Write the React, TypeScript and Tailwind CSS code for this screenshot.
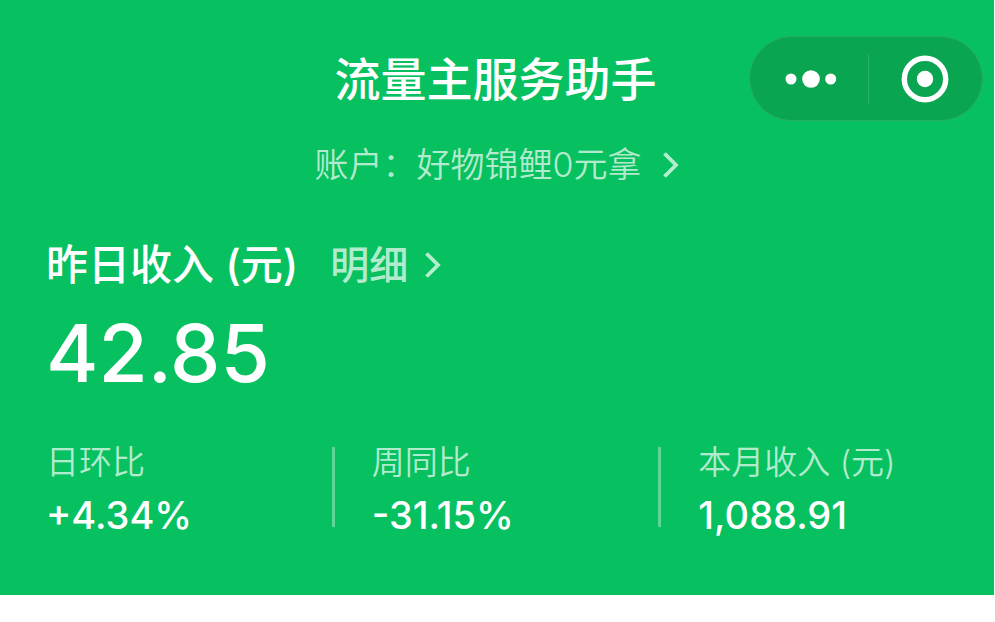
const stats = [
  { label: '日环比', value: '+4.34%' },
  { label: '周同比', value: '-31.15%' },
  { label: '本月收入 (元)', value: '1,088.91' },
];

function Chevron() {
  return (
    <svg className="h-7 w-[18px]" viewBox="0 0 18 28" fill="none" stroke="currentColor" strokeWidth="3.8">
      <path d="M2.5 2.5 14 14 2.5 25.5" />
    </svg>
  );
}

function Capsule() {
  return (
    <div className="flex h-[85px] w-[234px] items-center justify-self-end rounded-full border border-[#27ae60] bg-[#09a551]">
      <button type="button" aria-label="更多" className="flex h-full flex-1 items-center justify-center pl-1">
        <svg className="h-5 w-[52px]" viewBox="0 0 52 20" fill="white">
          <circle cx="6" cy="10" r="5.5" />
          <circle cx="26" cy="10" r="8.8" />
          <circle cx="45.7" cy="10" r="5.5" />
        </svg>
      </button>
      <div className="h-[50px] w-px bg-[#2bb068]" />
      <button type="button" aria-label="关闭" className="flex h-full flex-1 items-center justify-center">
        <svg className="size-12" viewBox="0 0 48 48" fill="none">
          <circle cx="24" cy="24" r="20.7" stroke="white" strokeWidth="5.4" />
          <circle cx="24" cy="24" r="8.2" fill="white" />
        </svg>
      </button>
    </div>
  );
}

export default function App() {
  return (
    <div className="bg-white pr-px font-['Inter','Noto_Sans_CJK_SC',sans-serif]" lang="zh-CN">
      <main className="bg-[#07c160] pt-9 pb-14 text-white">
        <header className="grid grid-cols-[1fr_auto_1fr] items-center pr-[11px] pl-2">
          <h1 className="col-start-2 text-[46px] leading-[60px] font-medium">流量主服务助手</h1>
          <Capsule />
        </header>

        {/* Account */}
        <div className="mt-5 flex justify-center">
          <button type="button" className="flex items-center gap-5 text-[34px] leading-[48px] font-[350] text-white/70">
            账户：好物锦鲤0元拿
            <Chevron />
          </button>
        </div>

        {/* Yesterday */}
        <section className="mt-11 px-[46px]">
          <div className="flex items-center gap-8">
            <h2 className="text-[42px] leading-[64px] font-medium">昨日收入 (元)</h2>
            <a href="#detail" className="flex items-center gap-4 text-[39px] leading-[64px] font-medium text-white/70">
              明细
              <Chevron />
            </a>
          </div>
          <p className="text-[80px] leading-[112px] font-medium">42.85</p>
        </section>

        {/* Stats */}
        <dl className="mt-8 grid grid-cols-[286fr_327fr_336fr] pl-[46px]">
          {stats.map((stat) => (
            <div key={stat.label} className="group flex">
              <div className="mt-1.5 mr-[37px] h-20 w-[3px] bg-white/35 group-first:hidden" />
              <div>
                <dt className="text-[33px] leading-[42px] font-[350] text-white/70">{stat.label}</dt>
                <dd className="mt-2 text-[38px] leading-[48px] font-medium">{stat.value}</dd>
              </div>
            </div>
          ))}
        </dl>
      </main>
    </div>
  );
}
